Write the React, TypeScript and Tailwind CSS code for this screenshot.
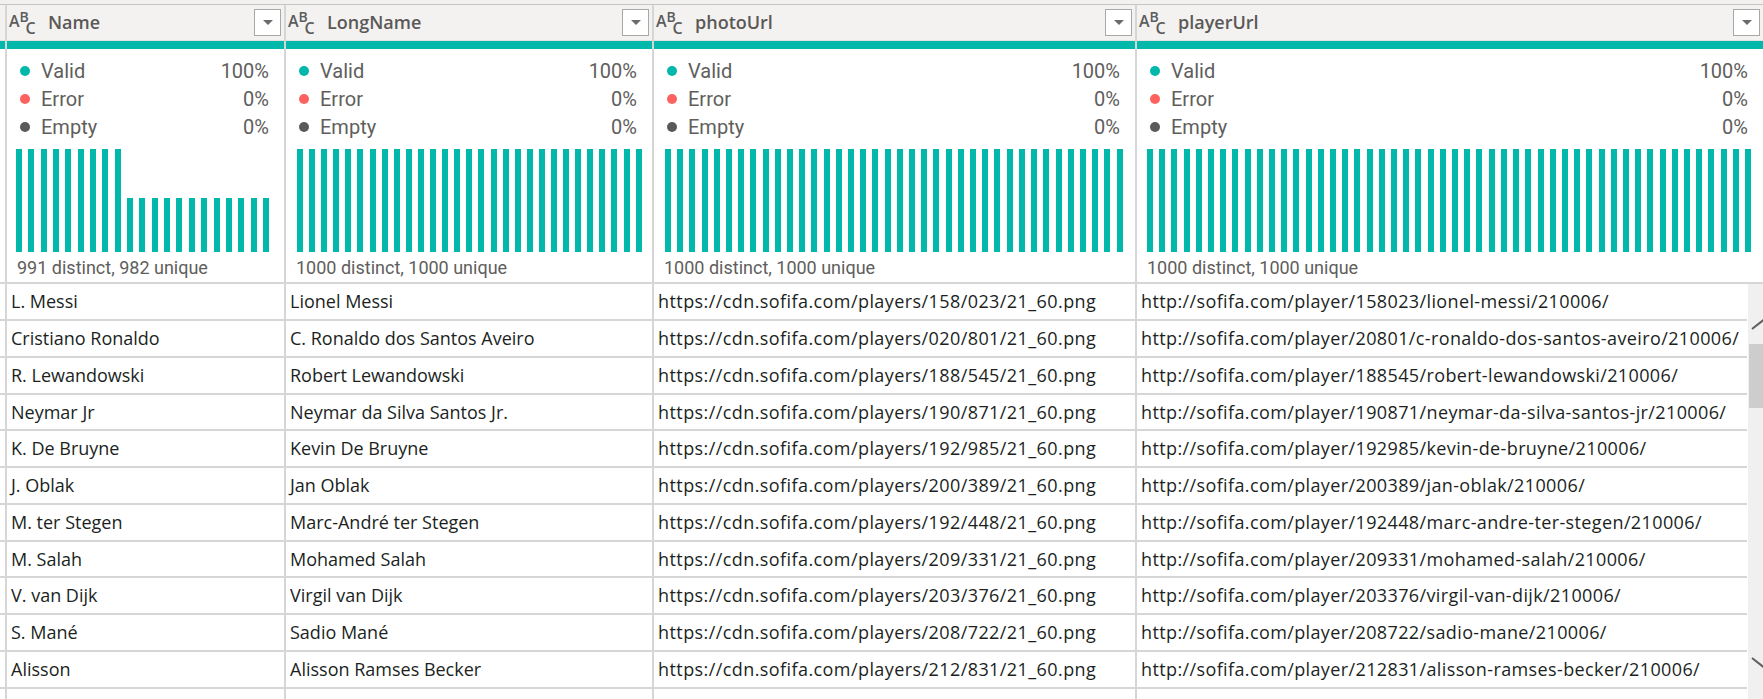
import React from "react";

type Col = {
  name: string;
  w: string;
  bars: number;
  tall?: number;
  barBox: string;
  distinct: string;
  cell: string;
};

const COLS: Col[] = [
  { name: "Name", w: "w-[279px]", bars: 21, tall: 9, barBox: "ml-[9px] w-[253px]", distinct: "991 distinct, 982 unique", cell: "" },
  { name: "LongName", w: "w-[368px]", bars: 29, barBox: "ml-[11px] w-[345px]", distinct: "1000 distinct, 1000 unique", cell: "" },
  { name: "photoUrl", w: "w-[483px]", bars: 38, barBox: "ml-[11px] w-[458px]", distinct: "1000 distinct, 1000 unique", cell: "tracking-[0.42px]" },
  { name: "playerUrl", w: "flex-1", bars: 50, barBox: "ml-[10px] w-[604px]", distinct: "1000 distinct, 1000 unique", cell: "tracking-[0.38px]" },
];

const ROWS: string[][] = [
  ["L. Messi", "Lionel Messi", "https://cdn.sofifa.com/players/158/023/21_60.png", "http://sofifa.com/player/158023/lionel-messi/210006/"],
  ["Cristiano Ronaldo", "C. Ronaldo dos Santos Aveiro", "https://cdn.sofifa.com/players/020/801/21_60.png", "http://sofifa.com/player/20801/c-ronaldo-dos-santos-aveiro/210006/"],
  ["R. Lewandowski", "Robert Lewandowski", "https://cdn.sofifa.com/players/188/545/21_60.png", "http://sofifa.com/player/188545/robert-lewandowski/210006/"],
  ["Neymar Jr", "Neymar da Silva Santos Jr.", "https://cdn.sofifa.com/players/190/871/21_60.png", "http://sofifa.com/player/190871/neymar-da-silva-santos-jr/210006/"],
  ["K. De Bruyne", "Kevin De Bruyne", "https://cdn.sofifa.com/players/192/985/21_60.png", "http://sofifa.com/player/192985/kevin-de-bruyne/210006/"],
  ["J. Oblak", "Jan Oblak", "https://cdn.sofifa.com/players/200/389/21_60.png", "http://sofifa.com/player/200389/jan-oblak/210006/"],
  ["M. ter Stegen", "Marc-André ter Stegen", "https://cdn.sofifa.com/players/192/448/21_60.png", "http://sofifa.com/player/192448/marc-andre-ter-stegen/210006/"],
  ["M. Salah", "Mohamed Salah", "https://cdn.sofifa.com/players/209/331/21_60.png", "http://sofifa.com/player/209331/mohamed-salah/210006/"],
  ["V. van Dijk", "Virgil van Dijk", "https://cdn.sofifa.com/players/203/376/21_60.png", "http://sofifa.com/player/203376/virgil-van-dijk/210006/"],
  ["S. Mané", "Sadio Mané", "https://cdn.sofifa.com/players/208/722/21_60.png", "http://sofifa.com/player/208722/sadio-mane/210006/"],
  ["Alisson", "Alisson Ramses Becker", "https://cdn.sofifa.com/players/212/831/21_60.png", "http://sofifa.com/player/212831/alisson-ramses-becker/210006/"],
  ["", "", "https://cdn.sofifa.com/players/231/747/21_60.png", "http://sofifa.com/player/231747/kylian-mbappe/210006/"],
];

const ROW_H = ["h-[37px]", "h-[37px]", "h-[37px]", "h-[36px]", "h-[37px]", "h-[37px]", "h-[37px]", "h-[36px]", "h-[37px]", "h-[37px]", "h-[37px]", "h-[37px]"];

function AbcIcon() {
  return (
    <svg width="30" height="26" viewBox="0 0 30 26" className="shrink-0 mt-[3px] overflow-visible">
      <g fill="#5c5c5c" fontFamily="'Open Sans', sans-serif" fontWeight="600">
        <text x="0" y="16" fontSize="16">A</text>
        <text x="10.5" y="11" fontSize="14">B</text>
        <text x="16.5" y="23" fontSize="16">C</text>
      </g>
    </svg>
  );
}

function Dropdown() {
  return (
    <div className="w-[27px] h-[27px] shrink-0 bg-white border border-[#a8a8a8] flex items-center justify-center mr-[3px]">
      <svg width="10" height="5" viewBox="0 0 10 5">
        <polygon points="0,0 10,0 5,5" fill="#6b6b6b" />
      </svg>
    </div>
  );
}

function Legend({ color, label, pct }: { color: string; label: string; pct: string }) {
  return (
    <div className="h-[28px] flex items-center pl-[13px] pr-[15px]">
      <div className={`w-[10px] h-[10px] rounded-full shrink-0 ${color}`} />
      <span className="ml-[11px] flex-1">{label}</span>
      <span>{pct}</span>
    </div>
  );
}

function Bars({ n, tall, box }: { n: number; tall?: number; box: string }) {
  const items = Array.from({ length: n }, (_, i) => i);
  return (
    <div className={`h-[103px] mt-[8px] flex items-end justify-between ${box}`}>
      {items.map((i) => (
        <div
          key={i}
          className={`w-[6px] shrink-0 bg-[#01b8aa] ${tall !== undefined && i >= tall ? "h-[54px]" : "h-[103px]"}`}
        />
      ))}
    </div>
  );
}

function ColumnTop({ col }: { col: Col }) {
  return (
    <div className={`${col.w} shrink-0 flex flex-col border-l-2 border-[#d6d6d6]`}>
      <div className="h-[35px] bg-[#f3f2f1] flex items-center pl-[2px]">
        <AbcIcon />
        <span className="ml-[9px] flex-1 text-[18px] font-semibold text-[#5b5957] font-['Open_Sans',sans-serif] whitespace-nowrap">
          {col.name}
        </span>
        <Dropdown />
      </div>
      <div className="h-[1px] bg-[#e4e2e0]" />
      <div className="h-[8px] bg-[#01b8aa]" />
      <div className="h-[235px] bg-white border-b-2 border-[#d6d6d6] pt-[8px] font-['Roboto',sans-serif] text-[#605e5c]">
        <div className="text-[20px]">
          <Legend color="bg-[#01b8aa]" label="Valid" pct="100%" />
          <Legend color="bg-[#fd625e]" label="Error" pct="0%" />
          <Legend color="bg-[#5a5a5a]" label="Empty" pct="0%" />
        </div>
        <Bars n={col.bars} tall={col.tall} box={col.barBox} />
        <div className="mt-[5px] h-[22px] leading-[22px] text-[18px] pl-[10px] whitespace-nowrap">{col.distinct}</div>
      </div>
    </div>
  );
}

export default function App() {
  return (
    <div className="w-[1763px] h-[699px] overflow-hidden bg-white">
      <div className="h-[5px] bg-[#f1f1f1] border-b border-[#c8c6c4]" />
      <div className="flex">
        <div className="w-[5px] shrink-0 flex flex-col">
          <div className="h-[35px] bg-[#f3f2f1]" />
          <div className="h-[1px] bg-[#e4e2e0]" />
          <div className="h-[8px] bg-[#01b8aa]" />
          <div className="h-[235px] border-b-2 border-[#d6d6d6]" />
        </div>
        {COLS.map((c) => (
          <ColumnTop key={c.name} col={c} />
        ))}
      </div>
      <div className="flex">
        <div className="w-[1747px] shrink-0 font-['Open_Sans',sans-serif] text-[18px] text-[#201f1e]">
          {ROWS.map((r, ri) => (
            <div key={ri} className={`flex border-b-2 border-[#d6d6d6] ${ROW_H[ri]}`}>
              <div className="w-[5px] shrink-0" />
              {r.map((cell, ci) => (
                <div
                  key={ci}
                  className={`${COLS[ci].w} ${COLS[ci].cell} shrink-0 min-w-0 border-l-2 border-[#d6d6d6] flex items-center pl-[4px] overflow-hidden whitespace-nowrap`}
                >
                  {cell}
                </div>
              ))}
            </div>
          ))}
        </div>
        <div className="w-[1px] shrink-0" />
        <div className="flex-1 h-[420px] overflow-hidden bg-[#f0f0f0] relative">
          <svg width="36" height="420" viewBox="0 0 36 420" className="absolute left-0 top-0">
            <polyline points="4,45 18,34 32,45" fill="none" stroke="#606060" strokeWidth="2" />
            <rect x="1" y="60" width="34" height="64" fill="#cdcdcd" />
            <polyline points="4,374 18,385 32,374" fill="none" stroke="#606060" strokeWidth="2" />
          </svg>
        </div>
      </div>
    </div>
  );
}
